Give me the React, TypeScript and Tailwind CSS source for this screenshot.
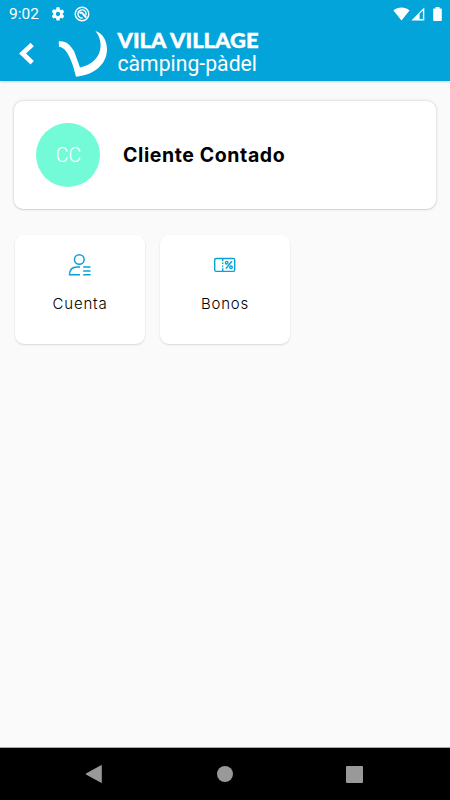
import React from 'react';

function StatusBar() {
  return (
    <div className="flex h-[27px] items-center pl-[9px] pr-[8px] pt-px text-white">
      <span className="w-[31px] whitespace-nowrap pt-px font-[Roboto,sans-serif] text-[15.5px] leading-none">9:02</span>
      <svg className="ml-[10px] h-4 w-4" viewBox="0 0 24 24" fill="currentColor">
        <path fillRule="evenodd" d="M19.14 12.94c.04-.3.06-.61.06-.94s-.02-.64-.07-.94l2.03-1.58a.49.49 0 0 0 .12-.61l-1.92-3.32a.49.49 0 0 0-.59-.22l-2.39.96a7 7 0 0 0-1.62-.94l-.36-2.54A.48.48 0 0 0 13.92 2h-3.84a.48.48 0 0 0-.48.41l-.36 2.54a7 7 0 0 0-1.62.94l-2.39-.96a.49.49 0 0 0-.59.22L2.72 8.47a.48.48 0 0 0 .12.61l2.03 1.58a8 8 0 0 0 0 2.28l-2.03 1.58a.49.49 0 0 0-.12.61l1.92 3.32c.12.22.37.29.59.22l2.39-.96c.5.38 1.03.7 1.62.94l.36 2.54c.05.24.24.41.48.41h3.84c.24 0 .44-.17.48-.41l.36-2.54a7 7 0 0 0 1.62-.94l2.39.96c.22.08.47 0 .59-.22l1.92-3.32a.48.48 0 0 0-.12-.61zM12 15.2a3.2 3.2 0 1 1 0-6.4 3.2 3.2 0 0 1 0 6.4z" />
      </svg>
      <svg className="ml-[8px] h-4 w-4" viewBox="0 0 16 16" fill="none" stroke="currentColor">
        <circle cx="8" cy="8" r="6.8" strokeWidth="1.4" />
        <path d="M11.9 9.3A4.1 4.1 0 1 0 8.6 12" strokeWidth="1.4" />
        <path d="M5.6 7.2C6.8 6.2 8.2 6.5 9 7.8L12.2 11.6" strokeWidth="2" />
      </svg>
      <div className="ml-auto flex items-center">
        <svg className="h-[14px] w-[17px]" viewBox="0 0 17 14" fill="currentColor"><path d="M.4 3.4C5.2-.3 11.8-.3 16.5 3.4L8.5 13.4z" /></svg>
        <svg className="ml-px h-[14px] w-[14px]" viewBox="0 0 14 14"><path d="M13.3.5V13.4H.4zM8.6 6.8V12h3.3V3.5z" fill="currentColor" fillRule="evenodd" /></svg>
        <svg className="ml-[8px] h-[14px] w-[9px]" viewBox="0 0 9 14" fill="currentColor"><path d="M2.5 0h4v1.4H8q.8 0 .8.8v11q0 .8-.8.8H1q-.8 0-.8-.8v-11q0-.8.8-.8h1.5z" /></svg>
      </div>
    </div>
  );
}

function Brand() {
  return (
    <svg className="ml-[22px] h-[54px] w-[214px] overflow-visible" viewBox="58 27 214 54" fill="#fff">
      <path d="M58.7 41.3C66 40.5 70 44.5 74.2 51.5L80 67.4C92 65.5 100.2 56.5 100.6 46.5C100.8 39.5 98.3 34.5 95.4 31C102.5 33.3 106.8 40 107 49C107 64 95 74.7 76 76.7L73.2 66.5C69 53.5 64.5 47.3 59 46.8Z" />
      <text x="117.5" y="48" textLength="141" lengthAdjust="spacingAndGlyphs" fontFamily="Lato, sans-serif" fontWeight="900" fontSize="20" stroke="#fff" strokeWidth=".4">VILA VILLAGE</text>
      <text x="117.5" y="71" textLength="139.5" lengthAdjust="spacingAndGlyphs" fontFamily="Roboto, sans-serif" fontSize="22">càmping-pàdel</text>
    </svg>
  );
}

function AccountIcon() {
  return (
    <svg className="h-6 w-6" viewBox="0 0 24 24" fill="none" stroke="#0aa2d8" strokeWidth="1.5">
      <circle cx="11.3" cy="6.5" r="4.8" />
      <path d="M12 14.1H9C4.5 14.1 1.7 16.3 1.5 21.7H12M15.2 14.1h7.3M15.2 18h7.3M15.2 21.7h7.3" />
    </svg>
  );
}

function VoucherIcon() {
  return (
    <svg className="h-6 w-6" viewBox="0 0 24 24" fill="none" stroke="#0aa2d8" strokeWidth="1.4">
      <rect x="1.7" y="5.5" width="20" height="12.9" rx="1.4" />
      <path d="M9.7 5.5v2.7m0 1.4v1.4m0 1.4v1.4m0 1.4v3" />
      <path d="M18.9 8.2l-6 7.4" strokeWidth="1.5" />
      <circle cx="13.7" cy="9.7" r="1.3" /><circle cx="18" cy="14.3" r="1.3" />
    </svg>
  );
}

function Tile({ icon, label }: { icon: React.ReactNode; label: string }) {
  return (
    <button className="flex h-[109px] w-[130px] flex-col items-center rounded-[9px] bg-white pt-[18px] shadow-[0_1px_2px_rgba(0,0,0,0.14)]">
      {icon}
      <span className="mt-[17px] font-[Inter,sans-serif] text-[15px] font-light leading-[20px] tracking-[0.8px] text-black">{label}</span>
    </button>
  );
}

export default function App() {
  return (
    <div className="flex h-[800px] w-[450px] flex-col overflow-hidden bg-[#fafafa]">
      <header className="h-[81px] shrink-0 bg-[#03a4d9] shadow-[0_1px_2px_rgba(0,0,0,0.18)]">
        <StatusBar />
        <div className="flex h-[54px] items-start pl-[18px]">
          <svg className="mt-[15px] h-6 w-[18px]" viewBox="0 0 18 24" fill="none" stroke="#fff" strokeWidth="4.8"><path d="M14.2 2.5L4.6 11.5l9.6 9.3" /></svg>
          <Brand />
        </div>
      </header>
      <main className="flex flex-1 flex-col pl-[14px] pr-[14px] pt-[20px]">
        <section className="flex h-[108px] items-center rounded-[9px] bg-white pl-[22px] shadow-[0_0_3px_rgba(0,0,0,0.22),0_1px_1px_rgba(0,0,0,0.08)]">
          <div className="flex h-[64px] w-[64px] items-center justify-center rounded-full bg-[#73fbd8] pl-px pt-px font-[Roboto,sans-serif] text-[19.5px] font-light text-white">CC</div>
          <h1 className="ml-[23px] pt-px font-[Inter,sans-serif] text-[19.5px] font-bold tracking-[0.6px] text-black">Cliente Contado</h1>
        </section>
        <div className="ml-px mt-[26px] flex gap-[15px]">
          <Tile icon={<AccountIcon />} label="Cuenta" />
          <Tile icon={<VoucherIcon />} label="Bonos" />
        </div>
      </main>
      <nav className="flex h-[53px] shrink-0 items-center border-t border-[#aaa] bg-black pl-[85px] pr-[87px] text-[#999]">
        <svg className="h-[18px] w-[18px]" viewBox="0 0 18 18" fill="currentColor"><path d="M1.4 8.3L16 .2q.8-.3.8.5v16.6q0 .8-.8.5L1.4 9.7q-1.2-.7 0-1.4z" /></svg>
        <span className="ml-[114px] h-4 w-4 rounded-full bg-[#999]" />
        <span className="ml-auto h-[17px] w-[17px] rounded-[1px] bg-[#999]" />
      </nav>
    </div>
  );
}
